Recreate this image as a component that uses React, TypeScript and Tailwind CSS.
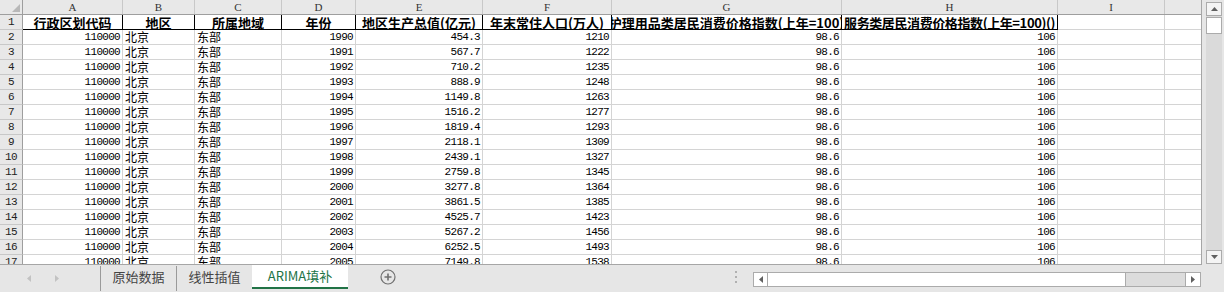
const cjk = "font-['Noto_Sans_CJK_SC',sans-serif]";
const num = "font-['Liberation_Mono','Noto_Sans_CJK_SC',monospace]";

const colLetters = [
  { name: "A", w: "w-[100px]" },
  { name: "B", w: "w-[72px]" },
  { name: "C", w: "w-[87px]" },
  { name: "D", w: "w-[74px]" },
  { name: "E", w: "w-[127px]" },
  { name: "F", w: "w-[129px]" },
  { name: "G", w: "w-[230px]" },
  { name: "H", w: "w-[216px]" },
  { name: "I", w: "w-[107px]" },
];

const headers = [
  "行政区划代码",
  "地区",
  "所属地域",
  "年份",
  "地区生产总值(亿元)",
  "年末常住人口(万人)",
  "护理用品类居民消费价格指数(上年=100)",
  "服务类居民消费价格指数(上年=100)()",
];

const gdp = ["454.3", "567.7", "710.2", "888.9", "1149.8", "1516.2", "1819.4", "2118.1", "2439.1", "2759.8", "3277.8", "3861.5", "4525.7", "5267.2", "6252.5", "7149.8"];
const pop = ["1210", "1222", "1235", "1248", "1263", "1277", "1293", "1309", "1327", "1345", "1364", "1385", "1423", "1456", "1493", "1538"];

const rows = gdp.map((g, i) => ({
  code: "110000",
  area: "北京",
  region: "东部",
  year: String(1990 + i),
  gdp: g,
  pop: pop[i],
  care: "98.6",
  service: "106",
}));

const RowHead = ({ n }: { n: number }) => (
  <div className={`w-[23px] shrink-0 h-full flex items-center justify-center bg-[#e8e8e8] border-r border-b border-r-[#9e9e9e] border-b-[#c8c8c8] text-[11px] tracking-[-0.5px] text-[#222] ${num}`}>
    {n}
  </div>
);

const Cell = ({ w, right, children }: { w: string; right?: boolean; children?: React.ReactNode }) => (
  <div className={`${w} shrink-0 h-full border-r border-b border-[#d4d4d4] flex items-center overflow-hidden whitespace-nowrap ${right ? "justify-end pr-[2px]" : "pl-[2px]"}`}>
    {children}
  </div>
);

const Num = ({ v }: { v: string }) => <span className={`text-[11px] tracking-[-0.7px] ${num}`}>{v}</span>;

const Sheet = () => (
  <div className="w-[1202px] h-[265px] shrink-0 overflow-hidden bg-white border-r border-b border-[#a6a6a6]">
    {/* column letters */}
    <div className="flex h-[15px] bg-[#e8e8e8] border-b border-[#9e9e9e]">
      <div className="w-[23px] shrink-0 h-full border-r border-[#9e9e9e] flex items-end justify-end pr-[2px] pb-[2px]">
        <svg width="8" height="8" viewBox="0 0 8 8">
          <polygon points="8,0 8,8 0,8" fill="#b8b8b8" />
        </svg>
      </div>
      {colLetters.map((c) => (
        <div key={c.name} className={`${c.w} shrink-0 h-full border-r border-[#c8c8c8] flex items-center justify-center text-[11px] leading-none text-[#333] font-['Liberation_Serif',serif]`}>
          {c.name}
        </div>
      ))}
      <div className="flex-1" />
    </div>

    {/* row 1: headers */}
    <div className="flex h-[15px]">
      <RowHead n={1} />
      {headers.map((h, i) => (
        <div key={i} className={`${colLetters[i].w} shrink-0 h-full border-r border-b border-black flex items-center justify-center overflow-hidden whitespace-nowrap text-[13px] leading-[15px] font-bold text-black ${cjk} ${i === 7 ? "tracking-[-0.4px]" : ""}`}>
          <span className="shrink-0">{h}</span>
        </div>
      ))}
      <Cell w="w-[107px]" />
      <div className="flex-1 h-full border-b border-[#d4d4d4]" />
    </div>

    {rows.map((r, i) => (
      <div key={i} className="flex h-[15px] text-black">
        <RowHead n={i + 2} />
        <Cell w="w-[100px]" right>
          <Num v={r.code} />
        </Cell>
        <Cell w="w-[72px]">
          <span className={`text-[12px] leading-[14px] ${cjk}`}>{r.area}</span>
        </Cell>
        <Cell w="w-[87px]">
          <span className={`text-[12px] leading-[14px] ${cjk}`}>{r.region}</span>
        </Cell>
        <Cell w="w-[74px]" right>
          <Num v={r.year} />
        </Cell>
        <Cell w="w-[127px]" right>
          <Num v={r.gdp} />
        </Cell>
        <Cell w="w-[129px]" right>
          <Num v={r.pop} />
        </Cell>
        <Cell w="w-[230px]" right>
          <Num v={r.care} />
        </Cell>
        <Cell w="w-[216px]" right>
          <Num v={r.service} />
        </Cell>
        <Cell w="w-[107px]" />
        <div className="flex-1 h-full border-b border-[#d4d4d4]" />
      </div>
    ))}
  </div>
);

const VScroll = () => (
  <div className="ml-[4px] mt-[2px] w-[16px] h-[262px] bg-[#dadada] flex flex-col">
    <div className="h-[14px] bg-[#f4f4f4] border border-[#ababab] flex items-center justify-center">
      <svg width="7" height="4" viewBox="0 0 7 4">
        <polygon points="0,4 7,4 3.5,0" fill="#606060" />
      </svg>
    </div>
    <div className="h-[17px] mt-[1px] bg-white border border-[#ababab]" />
    <div className="flex-1" />
    <div className="h-[14px] bg-[#f4f4f4] border border-[#ababab] flex items-center justify-center">
      <svg width="7" height="4" viewBox="0 0 7 4">
        <polygon points="0,0 7,0 3.5,4" fill="#606060" />
      </svg>
    </div>
  </div>
);

const TabBar = () => (
  <div className={`flex h-[27px] items-start text-[13px] ${cjk}`}>
    <div className="w-[100px] h-[26px] flex items-center pl-[27px] gap-[24px]">
      <svg width="4" height="7" viewBox="0 0 4 7">
        <polygon points="4,0 4,7 0,3.5" fill="#c2c2c2" />
      </svg>
      <svg width="4" height="7" viewBox="0 0 4 7">
        <polygon points="0,0 0,7 4,3.5" fill="#c2c2c2" />
      </svg>
    </div>
    <div className="w-px h-[25px] mt-[1px] bg-[#9a9a9a]" />
    <div className="w-[75px] h-[24px] flex items-center justify-center text-[#444]">原始数据</div>
    <div className="w-px h-[25px] mt-[1px] bg-[#9a9a9a]" />
    <div className="w-[75px] h-[24px] flex items-center justify-center text-[#444]">线性插值</div>
    <div className="w-[96px] h-[24px] bg-white border-b-2 border-[#217346] flex items-center justify-center text-[#217346]">
      ARIMA填补
    </div>
    <div className="w-[48px] h-[24px] flex items-center justify-end">
      <svg width="16" height="16" viewBox="0 0 16 16" fill="none" stroke="#707070" strokeWidth="1.2">
        <circle cx="8" cy="8" r="7" />
        <path d="M8 4.5v7M4.5 8h7" strokeWidth="1.6" />
      </svg>
    </div>
    <div className="flex-1" />
    <div className="w-[3px] h-[24px] flex flex-col items-center justify-center gap-[3px]">
      <div className="w-[2px] h-[2px] bg-[#b0b0b0]" />
      <div className="w-[2px] h-[2px] bg-[#b0b0b0]" />
      <div className="w-[2px] h-[2px] bg-[#b0b0b0]" />
    </div>
    <div className="w-[16px]" />
    <div className="mt-[7px] w-[448px] h-[15px] flex border border-[#ababab] bg-[#dcdcdc]">
      <div className="w-[14px] h-full bg-white border-r border-[#ababab] flex items-center justify-center">
        <svg width="4" height="7" viewBox="0 0 4 7">
          <polygon points="4,0 4,7 0,3.5" fill="#606060" />
        </svg>
      </div>
      <div className="w-[358px] h-full bg-white border-r border-[#ababab]" />
      <div className="flex-1" />
      <div className="w-[15px] h-full bg-white border-l border-[#ababab] flex items-center justify-center">
        <svg width="4" height="7" viewBox="0 0 4 7">
          <polygon points="0,0 0,7 4,3.5" fill="#606060" />
        </svg>
      </div>
    </div>
    <div className="w-[23px]" />
  </div>
);

export default function App() {
  return (
    <div className="w-[1224px] h-[292px] bg-[#e6e6e6] flex flex-col overflow-hidden">
      <div className="flex h-[265px]">
        <Sheet />
        <VScroll />
      </div>
      <TabBar />
    </div>
  );
}
